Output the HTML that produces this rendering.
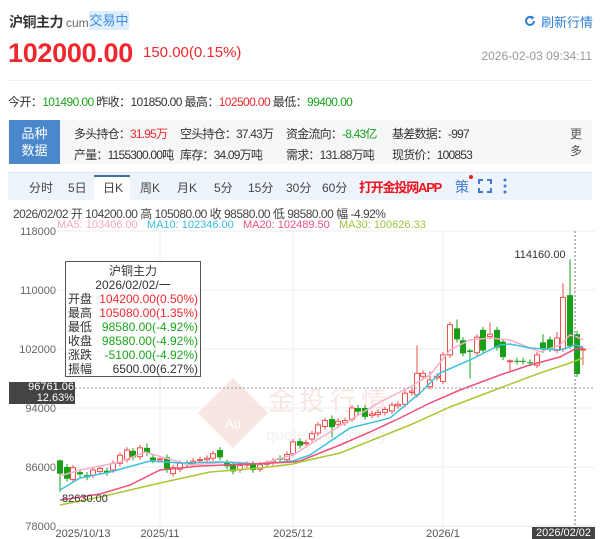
<!DOCTYPE html>
<html><head><meta charset="utf-8">
<style>
*{margin:0;padding:0;box-sizing:border-box}
body{width:600px;height:539px;overflow:hidden;background:#fff;font-family:"Liberation Sans","Noto Sans CJK SC",sans-serif;color:#333;position:relative}
.a{position:absolute;white-space:nowrap}
.red{color:#f0282d}.grn{color:#1aa51a}
</style></head><body>
<div class="a" style="left:9px;top:12px;font-size:14px;font-weight:bold;color:#333;letter-spacing:-0.5px">沪铜主力<span style="font-weight:normal;color:#666;font-size:12px;letter-spacing:0;margin-left:3px">cum</span></div>
<div class="a" style="left:89px;top:11px;width:40px;height:19px;background:#dcedfb;color:#3d8de0;font-size:13px;line-height:19px;text-align:center">交易中</div>
<svg class="a" style="left:524px;top:15px" width="12" height="12" viewBox="0 0 12 12"><path d="M10 6A4 4 0 1 1 8.5 2.8" fill="none" stroke="#2f7fd6" stroke-width="2"/><path d="M7 0.5L10.5 2.5L7.5 5Z" fill="#2f7fd6"/></svg>
<div class="a" style="left:541px;top:12px;font-size:13px;color:#2f7fd6">刷新行情</div>
<div class="a red" style="left:8px;top:38px;font-size:27px;font-weight:bold;letter-spacing:-0.3px">102000.00</div>
<div class="a red" style="left:143px;top:44px;font-size:15px">150.00(0.15%)</div>
<div class="a" style="right:8px;top:49px;font-size:12px;color:#999">2026-02-03 09:34:11</div>
<div class="a" style="left:8px;top:80px;width:584px;height:1px;background:#eee"></div>
<div class="a" style="left:8px;top:93px;font-size:12px;color:#333;letter-spacing:-0.6px">今开：<span class="grn">101490.00</span> 昨收：101850.00 最高：<span class="red">102500.00</span> 最低：<span class="grn">99400.00</span></div>
<div class="a" style="left:8px;top:120px;width:584px;height:44px;background:#f6f7f9"></div>
<div class="a" style="left:9px;top:120px;width:51px;height:44px;background:#4a87cb;color:#fff;font-size:13px;line-height:17px;text-align:center;padding-top:5px">品种<br>数据</div>
<div style="font-size:12px;line-height:21px;letter-spacing:-0.8px">
<div class="a" style="left:74px;top:124px">多头持仓：<span class="red">31.95万</span><br>产量：1155300.00吨</div>
<div class="a" style="left:180px;top:124px">空头持仓：37.43万<br>库存：34.09万吨</div>
<div class="a" style="left:286px;top:124px">资金流向：<span class="grn">-8.43亿</span><br>需求：131.88万吨</div>
<div class="a" style="left:392px;top:124px">基差数据：-997<br>现货价：100853</div>
</div>
<div class="a" style="left:570px;top:126px;font-size:12px;line-height:17px;color:#555">更<br>多</div>
<div class="a" style="left:8px;top:172px;width:584px;height:28px;background:#eef4fb;border-top:1px solid #dde6f0"></div>
<div class="a" style="left:94px;top:175px;width:36px;height:25px;background:#fff;border-top:2px solid #3f6fb0"></div>
<div class="a" style="left:0;top:179px;font-size:12px;color:#444">
<span class="a" style="left:29px">分时</span><span class="a" style="left:68px">5日</span><span class="a" style="left:103px">日K</span><span class="a" style="left:140px">周K</span><span class="a" style="left:177px">月K</span><span class="a" style="left:214px">5分</span><span class="a" style="left:248px">15分</span><span class="a" style="left:286px">30分</span><span class="a" style="left:322px">60分</span></div>
<div class="a" style="left:359px;top:177px;font-size:13px;font-weight:bold;color:#f0141e;letter-spacing:-1.2px">打开金投网APP</div>
<div class="a" style="left:455px;top:177px;font-size:14px;color:#3f7ad0">策</div>
<div class="a" style="left:469px;top:175px;width:4px;height:4px;border-radius:2px;background:#f01e1e"></div>
<svg class="a" style="left:478px;top:179px" width="14" height="14"><path d="M1 5V1H5M9 1H13V5M13 9V13H9M5 13H1V9" fill="none" stroke="#3f7ad0" stroke-width="2"/></svg>
<svg class="a" style="left:502px;top:178px" width="6" height="16"><circle cx="3" cy="2" r="1.5" fill="#3f7ad0"/><circle cx="3" cy="8" r="1.5" fill="#3f7ad0"/><circle cx="3" cy="14" r="1.5" fill="#3f7ad0"/></svg>
<div class="a" style="left:13px;top:205px;font-size:12px;color:#444;letter-spacing:-0.5px">2026/02/02 开 104200.00 高 105080.00 收 98580.00 低 98580.00 幅 -4.92%</div>
<div class="a" style="left:57px;top:219px;font-size:11px"><span style="color:#f7a8c0">MA5: 103406.00</span>&nbsp;&nbsp; <span style="color:#38bde0">MA10: 102346.00</span>&nbsp;&nbsp; <span style="color:#f0507a">MA20: 102489.50</span>&nbsp;&nbsp; <span style="color:#9cc43a">MA30: 100626.33</span></div>
<svg id="ch" class="a" style="left:0;top:0" width="600" height="539"></svg>
<div class="a" style="left:65px;top:261px;width:136px;height:116px;border:1px solid #555;background:#fff;font-size:12px;line-height:14px">
<div style="text-align:center;margin-top:2px">沪铜主力</div>
<div style="text-align:center">2026/02/02/一</div>
<div style="padding:0 2px"><div>开盘<span class="red" style="float:right">104200.00(0.50%)</span></div><div>最高<span class="red" style="float:right">105080.00(1.35%)</span></div><div>最低<span class="grn" style="float:right">98580.00(-4.92%)</span></div><div>收盘<span class="grn" style="float:right">98580.00(-4.92%)</span></div><div>涨跌<span class="grn" style="float:right">-5100.00(-4.92%)</span></div><div>振幅<span style="float:right">6500.00(6.27%)</span></div></div></div>
<div class="a" style="left:9px;top:382px;width:66px;height:22px;background:#444;color:#fff;font-size:11px;line-height:11px;text-align:right;padding-right:1px">96761.06<br>12.63%</div>
<div class="a" style="left:532px;top:527px;width:63px;height:12px;background:#444;color:#fff;font-size:11px;line-height:12px;text-align:center">2026/02/02</div>
<script>
var s='',Y=function(p){return 231+(118-p)*59/8};
[231,290,349,408,467].forEach(function(y){s+='<line x1="58" x2="595" y1="'+y+'" y2="'+y+'" stroke="#eee"/>'});
s+='<line x1="58" x2="595" y1="526" y2="526" stroke="#e4e4e4"/>';
[160,293,443].forEach(function(x){s+='<line x1="'+x+'" x2="'+x+'" y1="231" y2="526" stroke="#eee"/>'});
s+='<g opacity="0.5"><path d="M233 378L268 413L233 448L198 413Z" fill="#f3cfc6"/><text x="233" y="428" font-size="13" fill="#fff" text-anchor="middle" font-family="Liberation Sans">Au</text><text x="268" y="410" font-size="26" fill="#f3cfc6" font-family="Noto Sans CJK SC" letter-spacing="5">金投行情</text><text x="266" y="440" font-size="16" fill="#e6e6e6" font-family="Liberation Sans">quote.cngold.org</text></g>';
var yl=[[118000,231],[110000,290],[102000,349],[94000,408],[86000,467],[78000,526]];
yl.forEach(function(a){s+='<text x="56" y="'+(a[1]+4)+'" font-size="11" fill="#666" text-anchor="end" font-family="Liberation Sans">'+a[0]+'</text>'});
[[83,'2025/10/13'],[160,'2025/11'],[293,'2025/12'],[443,'2026/1']].forEach(function(a){s+='<text x="'+a[0]+'" y="537" font-size="11" fill="#555" text-anchor="middle" font-family="Liberation Sans">'+a[1]+'</text>'});
var L=[[60,'476 470 462 452 458 465 462 464 455 438 420 402 387 375 350 340 338 340 352 345 335 337 340',[60,80,120,145,165,190,230,260,293,320,350,380,410,430,450,470,490,510,540,560,570,577,583],'#f7b0c8'],
[0,'490 478 472 461 463 462 464 461 455 428 418 393 373 360 345 344 348 350 345 347',[60,80,110,150,180,220,260,293,310,350,390,420,440,470,500,510,530,560,575,583],'#3cc0e0'],
[0,'500 494 485 470 466 464 462 461 445 432 418 403 390 375 365 357 349 348',[60,100,130,160,200,250,293,300,340,370,400,430,460,500,530,560,575,583],'#f0507a'],
[0,'505 497 483 472 468 464 462 453 437 425 407 388 373 363 358',[60,100,160,210,260,293,300,340,380,410,450,500,540,570,583],'#a8c832']];
var C=[[60,86.9,85.1,87,82.6],[67,86,84.4],[73,84.3,85.9],[80,85.3,85],[87,84.9,84.6],[93,84.9,85.6],[100,85.4,85.8],[107,85.5,85.2],[113,85.6,86.5],[120,86.5,87.6],[127,87,88.3],[133,88.2,87.3],[140,87.4,88.6],[147,88.6,87.9,89.2],[153,87.3,86.9],[160,87,87.1],[167,87.3,85.6],[173,85.1,85.9],[180,85.7,86.5],[187,86.5,86.4],[193,86.4,86.8],[200,87,87],[207,87,87.2],[213,87.2,87.8],[220,88.3,87.3],[227,86.6,86.1],[233,86.3,85.4],[240,85.6,86.2],[247,86.3,86.4],[253,86.4,85.6],[260,85.7,86.3],[267,86.4,86.5],[273,86.6,86.8],[280,87.2,87],[287,87,87.7],[293,87.8,89.4],[300,89.5,88.9],[306,89.2,89.3],[312,89.8,90.5],[318,90.6,91.7],[325,91.5,92.3],[332,92.5,91.4,93,90],[338,91.8,92.2],[345,92,92.3],[352,92.5,94],[358,94,93.5],[365,94,92.8],[372,93,93.2],[378,93.1,93.4],[385,93.4,93.8],[392,93.6,94.4],[398,94.3,94.5],[405,94.5,96],[412,96.1,96.3],[417,95.8,98.7,102.5],[423,98.3,98.7],[430,96.9,97.8,99],[437,98.1,98.3],[443,97.6,101.2],[450,101.2,105.3],[457,104.8,103.3,106],[463,103.2,101.4],[470,101.8,101.6,102,98],[477,101.5,103.6],[483,104.6,101.8],[490,103.7,104,105.6],[497,104.6,102.2],[503,103,100.9],[510,100.4,100.4,100.6,99],[517,100.4,100.3],[523,100.4,100.3],[530,100.2,100.1],[537,99.8,101.2],[543,102.9,101.9,104],[550,103.3,102],[557,101.8,103.5,104.3],[563,102,109,110.9],[570,109.3,102.4,114.16],[577,104,98.6,104.5],[583,101.9,102,102.2,99.8]];
C.forEach(function(c){var x=c[0],o=c[1],cl=c[2],up=cl>=o,col=up?'#f0504a':'#15a015',h=c[3]||Math.max(o,cl)+0.4,l=c[4]||Math.min(o,cl)-0.4;
s+='<line x1="'+x+'" x2="'+x+'" y1="'+Y(h)+'" y2="'+Y(l)+'" stroke="'+col+'"/>';
var t=Y(Math.max(o,cl)),b=Y(Math.min(o,cl)),hh=Math.max(b-t,1);
if(up)s+='<rect x="'+(x-2.5)+'" y="'+t+'" width="5" height="'+hh+'" fill="#fff" stroke="'+col+'"/>';
else s+='<rect x="'+(x-3)+'" y="'+t+'" width="6" height="'+hh+'" fill="'+col+'"/>';});
L.forEach(function(m){var ys=m[1].split(' '),p=m[2].map(function(x,i){return x+','+ys[i]}).join(' ');s+='<polyline points="'+p+'" fill="none" stroke="'+m[3]+'" stroke-width="1.5"/>'});
s+='<text x="540" y="258" font-size="11" fill="#333" text-anchor="middle" font-family="Liberation Sans">114160.00</text>';
s+='<text x="62" y="502" font-size="11" fill="#333" font-family="Liberation Sans">82630.00</text>';
s+='<line x1="75" x2="595" y1="388" y2="388" stroke="#999" stroke-dasharray="2,2"/>';
s+='<line x1="575" x2="575" y1="231" y2="527" stroke="#777" stroke-dasharray="2,2"/>';
document.getElementById('ch').innerHTML=s;
</script>
</body></html>
